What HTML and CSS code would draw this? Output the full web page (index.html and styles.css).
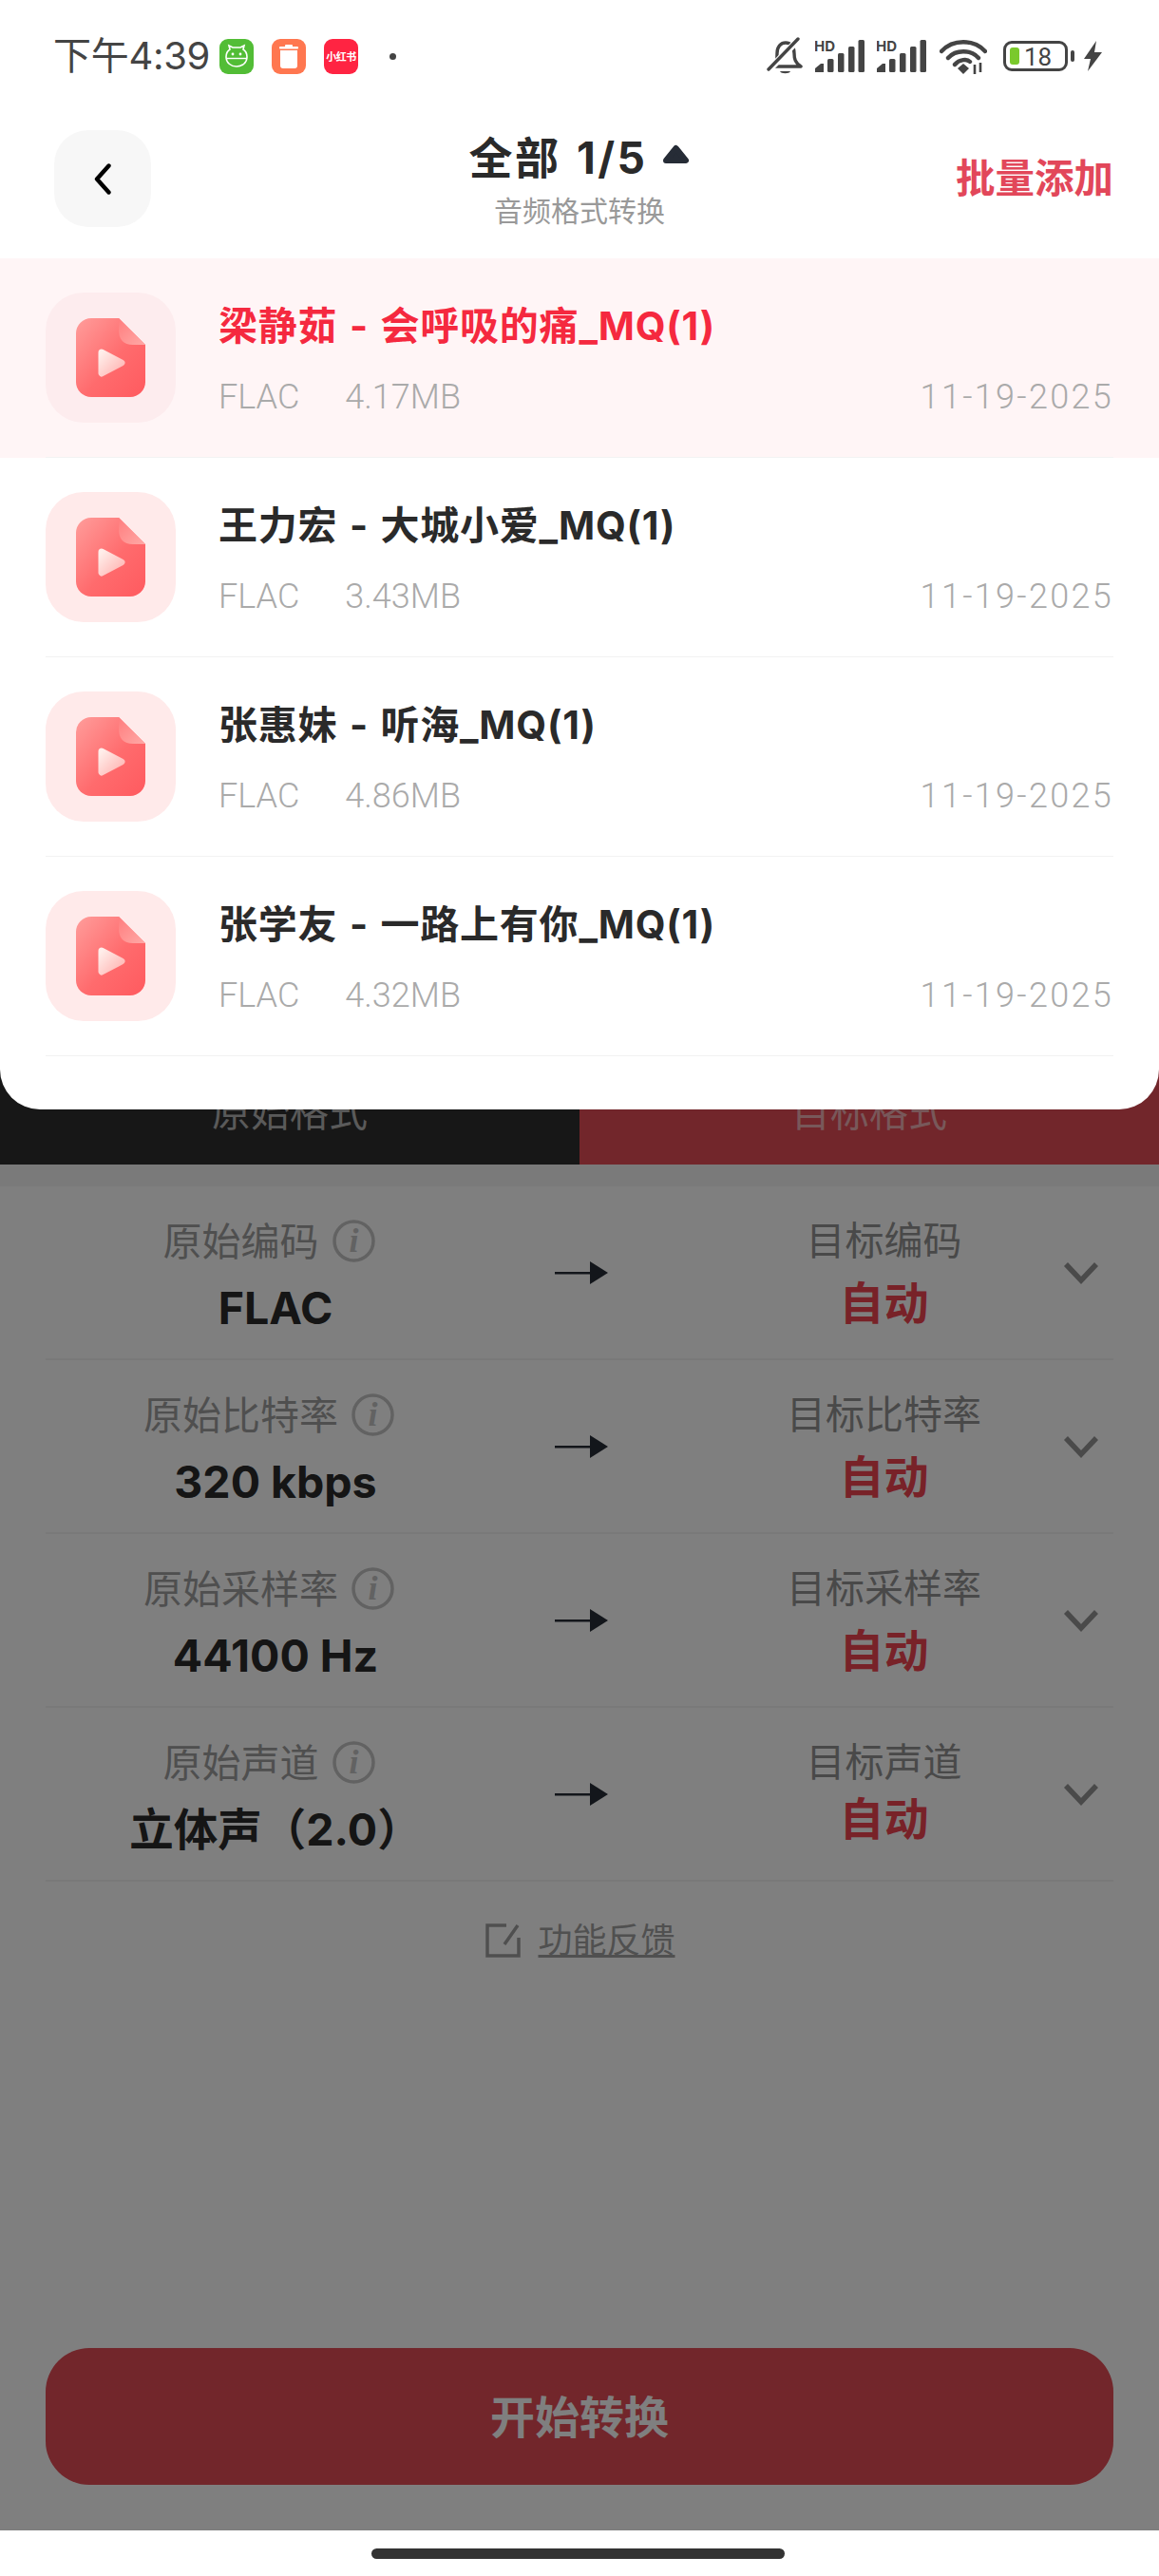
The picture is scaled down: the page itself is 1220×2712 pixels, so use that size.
FILE: index.html
```html
<!DOCTYPE html>
<html lang="zh-CN">
<head>
    <meta charset="utf-8">
    <title>音频格式转换</title>
    <link rel="stylesheet" href="styles.css">
</head>
<body>
    <svg class="sprite" aria-hidden="true">
        <defs>
            <linearGradient id="doc-fill" x1="0" y1="0" x2="1" y2="1">
                <stop offset="0" stop-color="#ff9d9b"/>
                <stop offset="0.55" stop-color="#ff6b6d"/>
                <stop offset="1" stop-color="#ff5a5f"/>
            </linearGradient>
            <linearGradient id="fold-fill" x1="0" y1="0" x2="1" y2="1">
                <stop offset="0" stop-color="#ff7d7e"/>
                <stop offset="1" stop-color="#ffa9a6"/>
            </linearGradient>
            <linearGradient id="play-fill" x1="0" y1="0" x2="1" y2="1">
                <stop offset="0" stop-color="#ffeeea"/>
                <stop offset="1" stop-color="#ffb4b2"/>
            </linearGradient>
            <symbol id="doc" viewBox="0 0 73 83">
                <path d="M16 0H45L73 28V67A16 16 0 0 1 57 83H16A16 16 0 0 1 0 67V16A16 16 0 0 1 16 0Z" fill="url(#doc-fill)"/>
                <path d="M45 0L73 28H60C50 28 45 22 45 13Z" fill="url(#fold-fill)"/>
                <path d="M27 36L48 47L27 58Z" fill="url(#play-fill)" stroke="url(#play-fill)" stroke-width="7" stroke-linejoin="round"/>
            </symbol>
            <symbol id="signal" viewBox="0 0 52 34">
                <text x="-1" y="12" class="hd-text">HD</text>
                <path d="M0 34V30L6 25H9V34Z" fill="#444"/>
                <rect x="13" y="20" width="6.5" height="14" rx="1.5" fill="#444"/>
                <rect x="24" y="14" width="6.5" height="20" rx="1.5" fill="#444"/>
                <rect x="35" y="7" width="6.5" height="27" rx="1.5" fill="#444"/>
                <rect x="45.5" y="0" width="6.5" height="34" rx="1.5" fill="#444"/>
            </symbol>
            <symbol id="info" viewBox="0 0 45 45">
                <circle cx="22.5" cy="22.5" r="20.5" fill="none" stroke="#c4c4c4" stroke-width="3.5"/>
                <text x="22.5" y="34" class="info-text">i</text>
            </symbol>
            <symbol id="arrow" viewBox="0 0 56 24">
                <path d="M0 11H40V13.5H0Z" fill="#262c36"/>
                <path d="M37 0L56 12L37 24Z" fill="#262c36"/>
            </symbol>
            <symbol id="chevron" viewBox="0 0 38 24">
                <path d="M3 3L19 20L35 3" fill="none" stroke="#949494" stroke-width="5.5"/>
            </symbol>
        </defs>
    </svg>

    <main class="page">
        <div class="tabs">
            <div class="tab tab-source">原始格式</div>
            <div class="tab tab-target">目标格式</div>
        </div>
        <div class="band"></div>

        <section class="params">
            <div class="param">
                <div class="cell cell-source">
                    <div class="cell-label">原始编码 <svg class="info-icon"><use href="#info"/></svg></div>
                    <div class="cell-value">FLAC</div>
                </div>
                <svg class="arrow"><use href="#arrow"/></svg>
                <div class="cell cell-target">
                    <div class="cell-label">目标编码</div>
                    <div class="cell-value">自动</div>
                </div>
                <svg class="chevron"><use href="#chevron"/></svg>
            </div>
            <div class="param">
                <div class="cell cell-source">
                    <div class="cell-label">原始比特率 <svg class="info-icon"><use href="#info"/></svg></div>
                    <div class="cell-value">320 kbps</div>
                </div>
                <svg class="arrow"><use href="#arrow"/></svg>
                <div class="cell cell-target">
                    <div class="cell-label">目标比特率</div>
                    <div class="cell-value">自动</div>
                </div>
                <svg class="chevron"><use href="#chevron"/></svg>
            </div>
            <div class="param">
                <div class="cell cell-source">
                    <div class="cell-label">原始采样率 <svg class="info-icon"><use href="#info"/></svg></div>
                    <div class="cell-value">44100 Hz</div>
                </div>
                <svg class="arrow"><use href="#arrow"/></svg>
                <div class="cell cell-target">
                    <div class="cell-label">目标采样率</div>
                    <div class="cell-value">自动</div>
                </div>
                <svg class="chevron"><use href="#chevron"/></svg>
            </div>
            <div class="param param-channel">
                <div class="cell cell-source">
                    <div class="cell-label">原始声道 <svg class="info-icon"><use href="#info"/></svg></div>
                    <div class="cell-value">立体声（2.0）</div>
                </div>
                <svg class="arrow"><use href="#arrow"/></svg>
                <div class="cell cell-target">
                    <div class="cell-label">目标声道</div>
                    <div class="cell-value">自动</div>
                </div>
                <svg class="chevron"><use href="#chevron"/></svg>
            </div>
        </section>

        <div class="feedback">
            <svg class="feedback-icon" viewBox="0 0 37 36">
                <path d="M22 2H2V34H35V15" fill="none" stroke="#9e9e9e" stroke-width="3.5"/>
                <path d="M34 2L20 22" fill="none" stroke="#9e9e9e" stroke-width="3.5"/>
            </svg>
            <span class="feedback-text">功能反馈</span>
        </div>

        <button class="start-button">开始转换</button>
    </main>

    <div class="scrim"></div>

    <div class="sheet">
        <div class="status-bar">
            <div class="status-left">
                <span class="clock">下午4:39</span>
                <span class="app-icon app-green">
                    <svg viewBox="0 0 36 37" width="36" height="37">
                        <path d="M11 11L10 7L14 9H22L26 7L25 11C28 13 29 16 29 19C29 25 24 29 18 29C12 29 7 25 7 19C7 16 8 13 11 11Z" fill="none" stroke="#fff" stroke-width="1.6"/>
                        <path d="M7.5 20.5H28.5" stroke="#fff" stroke-width="1.4"/>
                        <circle cx="14" cy="16" r="1.4" fill="#fff"/>
                        <circle cx="22" cy="16" r="1.4" fill="#fff"/>
                    </svg>
                </span>
                <span class="app-icon app-orange">
                    <svg viewBox="0 0 36 37" width="36" height="37">
                        <path d="M9 12H27V28A3 3 0 0 1 24 31H12A3 3 0 0 1 9 28Z" fill="#fff"/>
                        <rect x="8" y="8" width="20" height="2.5" rx="1" fill="#fff"/>
                        <rect x="14" y="6" width="8" height="2.5" rx="1" fill="#fff"/>
                    </svg>
                </span>
                <span class="app-icon app-red">小红书</span>
                <span class="status-dot"></span>
            </div>
            <div class="status-right">
                <svg class="bell" viewBox="0 0 38 40">
                    <path d="M7 31C11 27 11 23 11 17C11 10 15 6 20 6C25 6 29 10 29 17C29 23 30 27 36 31H7Z" fill="none" stroke="#444" stroke-width="3.4" stroke-linejoin="round"/>
                    <path d="M2 35L34 2" stroke="#fff" stroke-width="7"/>
                    <path d="M2 34L33 2" stroke="#444" stroke-width="3.4" stroke-linecap="round"/>
                    <path d="M14 36H25C24 39 15 39 14 36Z" fill="#444"/>
                </svg>
                <svg class="signal"><use href="#signal"/></svg>
                <svg class="signal"><use href="#signal"/></svg>
                <svg class="wifi" viewBox="0 0 50 37">
                    <path d="M2 13C14 0 36 0 48 13" fill="none" stroke="#444" stroke-width="4.4" stroke-linecap="round"/>
                    <path d="M9 20C17 11 33 11 41 20" fill="none" stroke="#444" stroke-width="4.4" stroke-linecap="round"/>
                    <path d="M16 27C21 21 29 21 32 24" fill="none" stroke="#444" stroke-width="4.4" stroke-linecap="round"/>
                    <path d="M25 37L19 31L25 26L31 31Z" fill="#444"/>
                    <path d="M37 27V37M43 25V35" stroke="#444" stroke-width="2.6"/>
                </svg>
                <div class="battery">
                    <span class="battery-level"></span>
                    <span class="battery-text">18</span>
                </div>
                <span class="battery-nub"></span>
                <svg class="bolt" viewBox="0 0 20 32">
                    <path d="M14 0L1 19H8L5 32L20 12H12Z" fill="#444"/>
                </svg>
            </div>
        </div>

        <header class="sheet-header">
            <button class="back-button">
                <svg viewBox="0 0 18 33" width="18" height="33">
                    <path d="M15.5 2.5L3 16.5L15.5 30.5" fill="none" stroke="#000" stroke-width="4.4" stroke-linecap="round" stroke-linejoin="round"/>
                </svg>
            </button>
            <div class="heading">
                <div class="heading-main">
                    <span class="heading-title">全部 1/5</span>
                    <svg class="heading-caret" viewBox="0 0 29 21">
                        <path d="M14.5 4L25 17H4Z" fill="#262c36" stroke="#262c36" stroke-width="6" stroke-linejoin="round"/>
                    </svg>
                </div>
                <div class="heading-sub">音频格式转换</div>
            </div>
            <div class="batch-add">批量添加</div>
        </header>

        <div class="file-list">
            <div class="file-row file-row-active">
                <div class="file-thumb"><svg class="file-doc"><use href="#doc"/></svg></div>
                <div class="file-info">
                    <div class="file-name">梁静茹 - 会呼吸的痛_MQ(1)</div>
                    <div class="file-meta">
                        <span class="file-type">FLAC</span>
                        <span>4.17MB</span>
                        <span class="file-date">11-19-2025</span>
                    </div>
                </div>
            </div>
            <div class="file-row">
                <div class="file-thumb"><svg class="file-doc"><use href="#doc"/></svg></div>
                <div class="file-info">
                    <div class="file-name">王力宏 - 大城小爱_MQ(1)</div>
                    <div class="file-meta">
                        <span class="file-type">FLAC</span>
                        <span>3.43MB</span>
                        <span class="file-date">11-19-2025</span>
                    </div>
                </div>
            </div>
            <div class="file-row">
                <div class="file-thumb"><svg class="file-doc"><use href="#doc"/></svg></div>
                <div class="file-info">
                    <div class="file-name">张惠妹 - 听海_MQ(1)</div>
                    <div class="file-meta">
                        <span class="file-type">FLAC</span>
                        <span>4.86MB</span>
                        <span class="file-date">11-19-2025</span>
                    </div>
                </div>
            </div>
            <div class="file-row">
                <div class="file-thumb"><svg class="file-doc"><use href="#doc"/></svg></div>
                <div class="file-info">
                    <div class="file-name">张学友 - 一路上有你_MQ(1)</div>
                    <div class="file-meta">
                        <span class="file-type">FLAC</span>
                        <span>4.32MB</span>
                        <span class="file-date">11-19-2025</span>
                    </div>
                </div>
            </div>
        </div>
    </div>

    <div class="home-bar"><span class="home-pill"></span></div>
</body>
</html>
```

FILE: styles.css
```css
/* page under the sheet */
body {
    margin: 0;
    width: 1220px;
    height: 2712px;
    position: relative;
    overflow: hidden;
    background-color: #fff;
    font-family: Inter, "Noto Sans CJK SC", sans-serif;
}

.sprite {
    position: absolute;
    width: 0;
    height: 0;
}

.hd-text {
    font-family: Inter, sans-serif;
    font-size: 15px;
    font-weight: 700;
    fill: #444;
}

.info-text {
    font-family: "Liberation Serif", serif;
    font-size: 36px;
    font-style: italic;
    font-weight: 700;
    text-anchor: middle;
    fill: #c4c4c4;
}

.page {
    height: 2664px;
    display: flex;
    flex-direction: column;
}

.tabs {
    display: flex;
    margin-top: 1118px;
    height: 108px;
}

.tab {
    flex: 1;
    display: flex;
    align-items: center;
    justify-content: center;
    padding-bottom: 8px;
    box-sizing: border-box;
    font-size: 41px;
}

.tab-source {
    background-color: #2e2e2e;
    color: #b4b4b4;
}

.tab-target {
    background-color: #e44c56;
    color: #f0b0b4;
}

.band {
    height: 23px;
    background-color: #f4f4f4;
}

.params {
    margin: 0 48px;
}

.param {
    height: 183px;
    box-sizing: border-box;
    border-bottom: 2px solid #f2f2f2;
    padding-right: 16px;
    display: grid;
    grid-template-columns: 484px 108px 1fr 37px;
    align-items: center;
}

.cell {
    display: flex;
    flex-direction: column;
    align-items: center;
}

.cell-label {
    display: flex;
    align-items: center;
    gap: 14px;
    height: 46px;
    font-size: 41px;
    line-height: 46px;
}

.cell-value {
    height: 46px;
    line-height: 46px;
    font-weight: 700;
    white-space: nowrap;
}

.cell-source {
    padding-top: 4px;
}

.cell-source .cell-label {
    color: #9e9e9e;
    margin-right: 14px;
}

.cell-source .cell-value {
    margin-top: 24px;
    font-size: 46.5px;
    color: #2a2a2a;
}

.cell-target {
    padding-left: 102px;
}

.cell-target .cell-label {
    color: #929292;
    margin-top: -2px;
}

.cell-target .cell-value {
    margin-top: 20px;
    font-size: 47px;
    color: #f04450;
}

.param-channel .cell-target .cell-value {
    margin-top: 14px;
    margin-bottom: 6px;
}

.info-icon {
    width: 45px;
    height: 45px;
}

.arrow {
    width: 56px;
    height: 24px;
    justify-self: end;
}

.chevron {
    width: 38px;
    height: 24px;
}

.feedback {
    display: flex;
    align-items: center;
    justify-content: center;
    gap: 18px;
    margin-top: 40px;
    padding-left: 2px;
}

.feedback-icon {
    width: 37px;
    height: 36px;
}

.feedback-text {
    font-size: 36px;
    line-height: 44px;
    color: #a0a0a0;
    text-decoration: underline;
}

.start-button {
    margin: auto 48px 48px;
    height: 144px;
    padding-bottom: 6px;
    border: 0;
    border-radius: 46px;
    background-color: #e44c56;
    color: #fff;
    font-family: inherit;
    font-size: 47px;
    font-weight: 700;
}

.scrim {
    position: absolute;
    top: 0;
    left: 0;
    right: 0;
    height: 2664px;
    background-color: rgba(0, 0, 0, 0.5);
}

/* sheet that drops from the top */
.sheet {
    position: absolute;
    top: 0;
    left: 0;
    right: 0;
    height: 1168px;
    background-color: #fff;
    border-radius: 0 0 42px 42px;
    overflow: hidden;
}

.status-bar {
    height: 110px;
    box-sizing: border-box;
    padding: 40px 60px 0 56px;
    display: flex;
    justify-content: space-between;
    align-items: flex-start;
}

.status-left,
.status-right {
    display: flex;
    align-items: center;
    height: 38px;
}

.clock {
    width: 175px;
    font-size: 40px;
    line-height: 38px;
    letter-spacing: -0.3px;
    color: #444;
}

.app-icon {
    width: 36px;
    height: 37px;
    margin-right: 19px;
    border-radius: 9px;
    display: flex;
    align-items: center;
    justify-content: center;
}

.app-green {
    background-color: #52bd36;
}

.app-orange {
    background-color: #ff7750;
}

.app-red {
    background-color: #ff2442;
    color: #fff;
    font-size: 11px;
    font-weight: 700;
    letter-spacing: -0.5px;
    white-space: nowrap;
}

.status-dot {
    width: 7px;
    height: 7px;
    margin-left: 14px;
    border-radius: 50%;
    background-color: #444;
}

.bell {
    width: 38px;
    height: 40px;
}

.signal {
    width: 52px;
    height: 34px;
    margin-left: 13px;
}

.wifi {
    width: 50px;
    height: 37px;
    margin-left: 14px;
}

.battery {
    width: 68px;
    height: 32px;
    box-sizing: border-box;
    margin-left: 17px;
    padding: 4px;
    display: flex;
    border: 3px solid #444;
    border-radius: 9px;
}

.battery-level {
    width: 10px;
    border-radius: 3px;
    background-color: #7ac92c;
}

.battery-text {
    margin-left: 5px;
    font-family: Roboto, sans-serif;
    font-size: 26px;
    line-height: 20px;
    color: #444;
}

.battery-nub {
    width: 4px;
    height: 12px;
    margin-left: 3px;
    border-radius: 2px;
    background-color: #444;
}

.bolt {
    width: 20px;
    height: 32px;
    margin-left: 9px;
}

.sheet-header {
    height: 162px;
    box-sizing: border-box;
    padding: 27px 48px 0 57px;
    display: grid;
    grid-template-columns: 1fr auto 1fr;
    align-items: start;
}

.back-button {
    width: 102px;
    height: 102px;
    padding: 0;
    border: 0;
    border-radius: 36px;
    background-color: #f7f7f7;
    display: flex;
    align-items: center;
    justify-content: center;
}

.heading {
    text-align: center;
    margin-left: -9px;
}

.heading-main {
    display: flex;
    align-items: center;
    justify-content: center;
    gap: 16px;
    height: 56px;
    margin-top: -2px;
    font-size: 46px;
    font-weight: 700;
    color: #2a2a2a;
}

.heading-title {
    letter-spacing: 2.5px;
    word-spacing: 3px;
}

.heading-caret {
    width: 29px;
    height: 21px;
    margin-bottom: 2px;
}

.heading-sub {
    margin-top: 13px;
    font-size: 30px;
    line-height: 36px;
    color: #999;
}

.batch-add {
    justify-self: end;
    margin-top: 27px;
    font-size: 41.5px;
    font-weight: 700;
    line-height: 48px;
    color: #e2475a;
}

.file-row {
    height: 210px;
    box-sizing: border-box;
    padding: 36px 48px 0;
    display: flex;
    position: relative;
}

.file-row::after {
    content: "";
    position: absolute;
    left: 48px;
    right: 48px;
    bottom: 0;
    height: 1px;
    background-color: #f2f2f2;
}

.file-row-active {
    background-color: #fff5f6;
}

.file-row-active .file-name {
    color: #f5293f;
}

.file-row-active .file-thumb {
    background-color: #fdecee;
}

.file-thumb {
    width: 137px;
    height: 137px;
    flex: none;
    border-radius: 40px;
    background-color: #ffeaea;
    display: flex;
    align-items: center;
    justify-content: center;
}

.file-doc {
    width: 73px;
    height: 83px;
}

.file-info {
    flex: 1;
    margin-left: 45px;
    padding-top: 10px;
}

.file-name {
    height: 50px;
    font-size: 41px;
    font-weight: 700;
    line-height: 50px;
    letter-spacing: 0.8px;
    word-spacing: 2px;
    color: #2a2a2a;
}

.file-meta {
    display: flex;
    gap: 48px;
    margin-top: 28px;
    font-family: Roboto, sans-serif;
    font-size: 36px;
    font-weight: 300;
    line-height: 44px;
    color: #aaa;
}

.file-date {
    margin-left: auto;
    letter-spacing: 2.3px;
}

.home-bar {
    height: 48px;
    display: flex;
    justify-content: center;
    padding-top: 19px;
    box-sizing: border-box;
}

.home-pill {
    width: 435px;
    height: 11px;
    margin-right: 3px;
    border-radius: 6px;
    background-color: #333;
}
```
